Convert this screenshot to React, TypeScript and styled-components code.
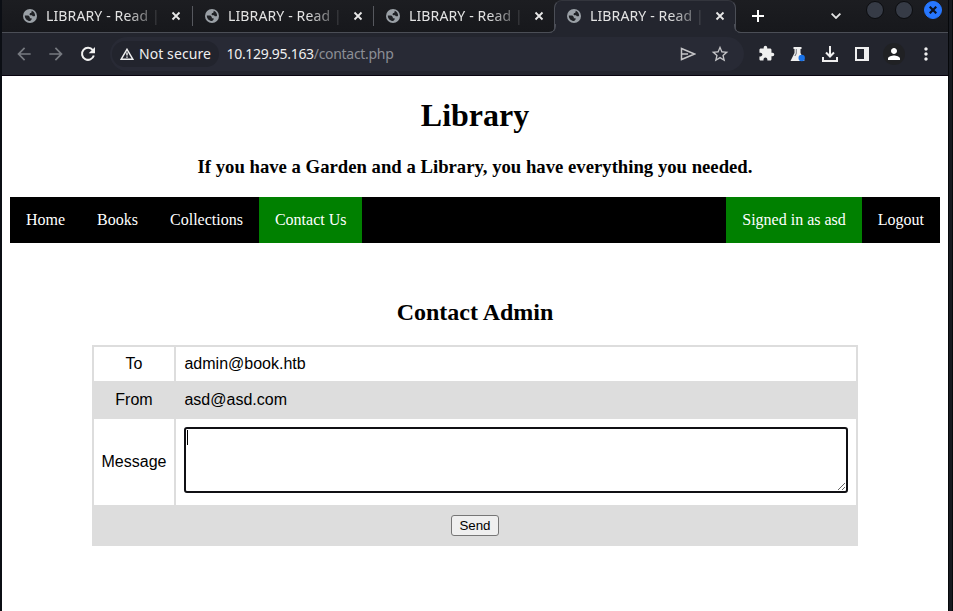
import React from "react";
import styled, { createGlobalStyle } from "styled-components";
import { MdArrowBack, MdArrowForward, MdStarOutline, MdExtension, MdPerson, MdMoreVert } from "react-icons/md";

const Global = createGlobalStyle`
  * { box-sizing: border-box; }
  body { margin: 0; overflow: hidden; background: #15171d; }
`;

const Window = styled.div`
  width: 953px;
  height: 611px;
  padding: 0 5px 0 2px;
  display: flex;
  flex-direction: column;
  background: linear-gradient(90deg, #0b0e14 0 948px, #06080b 948px 949px, #171a20 949px 952px, #07090c 952px);
  overflow: hidden;
`;

const TabStrip = styled.div`
  height: 33px;
  flex: none;
  display: flex;
  padding-left: 10px;
  background: linear-gradient(#1c1d21, #17181c);
  border-bottom: 1px solid #4b4e56;
  color: #e3e3e3;
  font: 14px "Noto Sans", sans-serif;
`;

const Tab = styled.div<{ $active?: boolean; $divider?: boolean }>`
  position: relative;
  width: ${(p) => (p.$active ? 182 : 181)}px;
  height: ${(p) => (p.$active ? 33 : 32)}px;
  display: flex;
  align-items: center;
  padding-left: 12px;
  flex: none;
  &:first-child { padding-left: 11px; }
  ${(p) => p.$divider && `
    &::after {
      content: "";
      position: absolute;
      right: 0;
      top: 6px;
      width: 1px;
      height: 20px;
      background: #56585e;
    }
  `}
  ${(p) => p.$active && `
    margin-left: -1px;
    background: #23252e;
    border: 1px solid #4b4e56;
    border-top-color: #33353d;
    border-bottom: 0;
    border-radius: 8px 8px 0 0;
    padding-bottom: 2px;
    &::before, &::after {
      content: "";
      position: absolute;
      bottom: 0;
      width: 8px;
      height: 8px;
      border-bottom: 1px solid #4b4e56;
    }
    &::before {
      left: -8px;
      border-right: 1px solid #4b4e56;
      border-bottom-right-radius: 7px;
      box-shadow: 2px 2px 0 #23252e;
    }
    &::after {
      right: -8px;
      border-left: 1px solid #4b4e56;
      border-bottom-left-radius: 7px;
      box-shadow: -2px 2px 0 #23252e;
    }
  `}
`;

const Favicon = styled.svg`
  width: 14px;
  height: 14px;
  flex: none;
  margin-right: 9px;
`;

const TabTitle = styled.span`
  width: 114px;
  flex: none;
  white-space: nowrap;
  letter-spacing: 0.13px;
  line-height: 20px;
  mask-image: linear-gradient(90deg, #000 80px, transparent 116px);
`;

const CloseIcon = styled.svg`
  width: 10px;
  height: 10px;
  margin-left: 11px;
  flex: none;
`;

const NewTab = styled.svg`
  width: 12px;
  height: 12px;
  margin: 10px 0 0 16px;
`;

const TabSearch = styled.svg`
  width: 10px;
  height: 6px;
  margin: 13px 0 0 67px;
`;

const Controls = styled.div`
  display: flex;
  gap: 11px;
  margin: 1px 0 0 25px;
`;

const Control = styled.div<{ $close?: boolean }>`
  width: 18px;
  height: 18px;
  border-radius: 50%;
  background: ${(p) => (p.$close ? "#2777ff" : "#363b46")};
  border: 1px solid ${(p) => (p.$close ? "#2777ff" : "#0b0c0f")};
  display: flex;
  align-items: center;
  justify-content: center;
`;

const Toolbar = styled.div`
  height: 43px;
  flex: none;
  display: flex;
  align-items: center;
  padding: 0 0 1px 12px;
  background: #23252e;
  border-bottom: 1px solid #08030f;
  color: #efefef;
`;

const NavButton = styled.div<{ $off?: boolean }>`
  width: 32px;
  display: flex;
  align-items: center;
  color: ${(p) => (p.$off ? "#777a80" : "#f1f1f1")};
`;

const Omnibox = styled.div`
  width: 634px;
  height: 34px;
  padding: 0 16px 0 2px;
  border-radius: 17px;
  background: #282a35;
  display: flex;
  align-items: center;
  font: 14px "Noto Sans", sans-serif;
`;

const Security = styled.div`
  height: 26px;
  width: 107px;
  padding-left: 8px;
  border-radius: 13px;
  background: #22242d;
  display: flex;
  align-items: center;
  gap: 5px;
  white-space: nowrap;
  letter-spacing: 0.08px;
`;

const Address = styled.span`
  flex: 1;
  margin-left: 7.5px;
  white-space: nowrap;
  letter-spacing: -0.31px;
`;

const Path = styled.span`
  color: #8c8e95;
`;

const OmniIcon = styled.div`
  width: 32px;
  display: flex;
  justify-content: center;
  color: #c4c4c7;
  &:last-child { margin-right: -8px; }
`;

const Actions = styled.div`
  display: flex;
  margin-left: 6px;
`;

const Action = styled.div<{ $avatar?: boolean }>`
  width: ${(p) => (p.$avatar ? 22 : 32)}px;
  margin: ${(p) => (p.$avatar ? "0 5px" : "0")};
  height: 22px;
  border-radius: ${(p) => (p.$avatar ? "50%" : "0")};
  background: ${(p) => (p.$avatar ? "#202124" : "transparent")};
  display: flex;
  align-items: center;
  justify-content: center;
`;

const Page = styled.main`
  flex: 1;
  padding: 0 8px;
  background: #fff;
  color: #000;
  font: 16px "Liberation Serif", serif;
  text-align: center;
`;

const Title = styled.h1`
  margin: 21px 0 21px;
  font-size: 32px;
  line-height: 37px;
`;

const Tagline = styled.h3`
  margin: 0 0 18px;
  font-size: 18.72px;
  line-height: 24px;
`;

const Menu = styled.nav`
  height: 46px;
  display: flex;
  background: #000;
`;

const MenuItem = styled.a<{ $green?: boolean; $right?: boolean }>`
  padding: 14px 16px;
  line-height: 18px;
  color: #fff;
  background: ${(p) => (p.$green ? "green" : "transparent")};
  margin-left: ${(p) => (p.$right ? "auto" : "0")};
`;

const Heading = styled.h2`
  margin: 56px 0 19px;
  font-size: 24px;
  line-height: 27px;
`;

const Form = styled.table`
  width: 766px;
  margin: 0 auto;
  border-collapse: collapse;
  font: 16px "Liberation Sans", sans-serif;
`;

const Row = styled.tr<{ $h: number; $shade?: boolean }>`
  height: ${(p) => p.$h}px;
  background: ${(p) => (p.$shade ? "#ddd" : "#fff")};
`;

const Cell = styled.td<{ $label?: boolean; $center?: boolean }>`
  width: ${(p) => (p.$label ? "82px" : "auto")};
  padding: 0 8px;
  border: 2px solid #ddd;
  text-align: ${(p) => (p.$label || p.$center ? "center" : "left")};
  vertical-align: middle;
`;

const Message = styled.textarea`
  display: block;
  width: 664px;
  height: 66px;
  margin: 0 0 4px;
  padding: 2px;
  border: 2px solid #101014;
  border-radius: 3px;
  outline: 0;
  background: #fff;
  font: 13.333px "Liberation Mono", monospace;
`;

const MessageArea = styled.div`
  position: relative;
`;

const Caret = styled.span`
  position: absolute;
  left: 3px;
  top: 3px;
  width: 1px;
  height: 15px;
  background: #000;
`;

const Send = styled.button`
  display: block;
  width: 48px;
  height: 21px;
  margin: 0 auto;
  padding: 0;
  border: 1px solid #767676;
  border-radius: 3px;
  background: #efefef;
  color: #000;
  font: 13.333px "Liberation Sans", sans-serif;
`;

const Globe = () => (
  <Favicon viewBox="0 0 14 14">
    <circle cx="7" cy="7" r="7" fill="#9aa0a6" />
    <path d="M8.8 1.8c1.9.7 3.3 2.6 3.3 4.7l-.5.7H9.8L9 6.300H7.200L6.400 5.200l.8-1.300h1zM1.800 6.600h3.600l1.400 1.300v1.300h1.800v1.400L7.200 12.100C4.200 12.200 1.700 9.700 1.800 6.600z" fill="#202226" />
  </Favicon>
);

const BrowserTab = ({ active, divider }: { active?: boolean; divider?: boolean }) => (
  <Tab $active={active} $divider={divider}>
    <Globe />
    <TabTitle>LIBRARY - Read |</TabTitle>
    <CloseIcon viewBox="0 0 10 10" fill="none" stroke="#e8e8e8" strokeWidth="1.8">
      <path d="M1.500 1.500l7 7M8.500 1.500l-7 7" />
    </CloseIcon>
  </Tab>
);

export default function App() {
  return (
    <>
      <Global />
      <Window>
        <TabStrip>
          <BrowserTab divider />
          <BrowserTab divider />
          <BrowserTab />
          <BrowserTab active />
          <NewTab viewBox="0 0 12 12" fill="none" stroke="#fff" strokeWidth="2">
            <path d="M6 0v12M0 6h12" />
          </NewTab>
          <TabSearch viewBox="0 0 10 6" fill="none" stroke="#e3e3e3" strokeWidth="1.8">
            <path d="M.6.6L5 5 9.400.6" />
          </TabSearch>
          <Controls>
            <Control />
            <Control />
            <Control $close>
              <svg width="8" height="8" viewBox="0 0 8 8" fill="none" stroke="#0c1220" strokeWidth="2.2">
                <path d="M.7.7l6.600 6.600M7.300.7L.7 7.300" />
              </svg>
            </Control>
          </Controls>
        </TabStrip>
        <Toolbar>
          <NavButton $off><MdArrowBack size={20} /></NavButton>
          <NavButton $off><MdArrowForward size={20} /></NavButton>
          <NavButton>
            <svg width="20" height="20" viewBox="0 0 20 20">
              <path d="M14.800 6.200A6 6 0 1 0 15.800 11.500" fill="none" stroke="currentColor" strokeWidth="2" />
              <path d="M17 3v6.300h-6.300z" fill="currentColor" />
            </svg>
          </NavButton>
          <Omnibox>
            <Security>
              <svg width="14" height="12" viewBox="0 0 14 12" fill="none" stroke="#eee" strokeWidth="1.5">
                <path d="M7 1.300 12.800 11.200H1.200zM7 4.500v3M7 8.500v1.200" />
              </svg>
              Not secure
            </Security>
            <Address>10.129.95.163<Path>/contact.php</Path></Address>
            <OmniIcon>
              <svg width="16" height="14" viewBox="0 0 16 14" fill="none" stroke="currentColor" strokeWidth="1.500">
                <path d="M1.500 1.500 14.500 7 1.500 12.500zM1.500 7H8" />
              </svg>
            </OmniIcon>
            <OmniIcon><MdStarOutline size={20} /></OmniIcon>
          </Omnibox>
          <Actions>
            <Action><MdExtension size={17} /></Action>
            <Action>
              <svg width="16" height="16" viewBox="0 0 16 16">
                <path d="M3.500 1h8v2h-1v4l4 8H.5l4-8V3h-1z" fill="#efefef" />
                <path d="M5.800 3h1v4.500L5.500 10H4.300l1.500-2.800z" fill="#777a80" />
                <circle cx="11.700" cy="12" r="3.200" fill="#1a73e8" />
              </svg>
            </Action>
            <Action>
              <svg width="16" height="16" viewBox="0 0 16 16" fill="none" stroke="currentColor" strokeWidth="2">
                <path d="M8 0v10M4 6.500l4 4 4-4M1 11v4h14v-4" />
              </svg>
            </Action>
            <Action>
              <svg width="14" height="14" viewBox="0 0 14 14">
                <path d="M0 0h14v14H0zM2 2v10h7V2z" fill="currentColor" fillRule="evenodd" />
              </svg>
            </Action>
            <Action $avatar><MdPerson size={18} color="#fff" /></Action>
            <Action><MdMoreVert size={20} /></Action>
          </Actions>
        </Toolbar>
        <Page>
          <Title>Library</Title>
          <Tagline>If you have a Garden and a Library, you have everything you needed.</Tagline>
          <Menu>
            <MenuItem>Home</MenuItem>
            <MenuItem>Books</MenuItem>
            <MenuItem>Collections</MenuItem>
            <MenuItem $green>Contact Us</MenuItem>
            <MenuItem $green $right>Signed in as asd</MenuItem>
            <MenuItem>Logout</MenuItem>
          </Menu>
          <Heading>Contact Admin</Heading>
          <Form>
            <tbody>
              <Row $h={36}><Cell $label>To</Cell><Cell>admin@book.htb</Cell></Row>
              <Row $h={36} $shade><Cell $label>From</Cell><Cell>asd@asd.com</Cell></Row>
              <Row $h={88}>
                <Cell $label>Message</Cell>
                <Cell><MessageArea><Message aria-label="Message" /><Caret /></MessageArea></Cell>
              </Row>
              <Row $h={39} $shade><Cell colSpan={2} $center><Send>Send</Send></Cell></Row>
            </tbody>
          </Form>
        </Page>
      </Window>
    </>
  );
}
